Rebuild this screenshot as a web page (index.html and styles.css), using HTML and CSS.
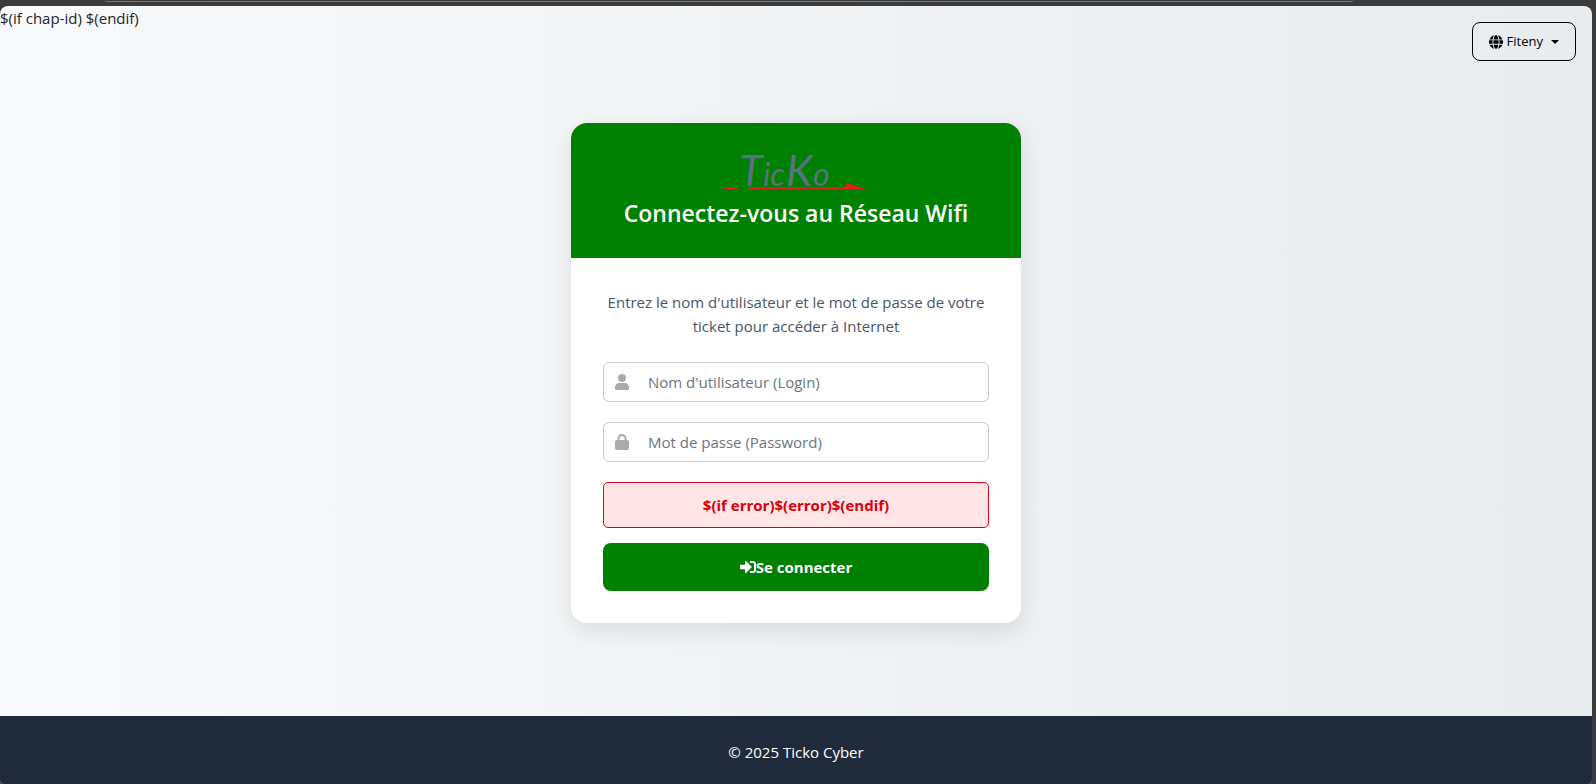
FILE: index.html
```
<!DOCTYPE html>
<html lang="fr">
<head>
<meta charset="utf-8">
<meta name="viewport" content="width=device-width, initial-scale=1">
<title>Ticko Cyber</title>
<link rel="stylesheet" href="styles.css">
</head>
<body>
<div class="frame-bar"></div>
<div class="page">
  <div class="chap">$(if chap-id) $(endif)</div>
  <button class="lang" type="button" aria-haspopup="true">
    <svg class="lang-icon" viewBox="0 0 512 512" aria-hidden="true"><path fill="currentColor" d="M352 256c0 22.200-1.200 43.600-3.300 64H163.300c-2.200-20.400-3.300-41.800-3.300-64s1.200-43.600 3.300-64h185.300c2.200 20.400 3.400 41.800 3.400 64zm28.800-64h123.100c5.300 20.500 8.100 41.900 8.100 64s-2.800 43.500-8.100 64H380.800c2.100-20.600 3.200-42 3.200-64s-1.100-43.400-3.200-64zm112.600-32H376.700c-10-63.900-29.800-117.400-55.300-151.600 78.300 20.700 142 77.500 172 151.600zm-149.100 0H167.700c6.100-36.400 15.500-68.600 27-94.700 10.500-23.600 22.200-40.700 33.500-51.500C239.400 3.200 248.700 0 256 0s16.600 3.200 27.800 13.800c11.300 10.800 23 27.900 33.500 51.500 11.600 26 20.900 58.200 27 94.700zm-209 0H18.600C48.600 85.900 112.200 29.100 190.600 8.400 165.100 42.600 145.300 96.100 135.300 160zM8.100 192h123.100c-2.100 20.600-3.200 42-3.200 64s1.100 43.400 3.200 64H8.100C2.800 299.500 0 278.100 0 256s2.800-43.500 8.100-64zm186.600 254.600c-11.600-26-20.900-58.200-27-94.600h176.600c-6.100 36.400-15.500 68.600-27 94.600-10.500 23.600-22.200 40.700-33.500 51.500C272.600 508.800 263.300 512 256 512s-16.600-3.200-27.800-13.800c-11.300-10.800-23-27.900-33.500-51.600zM135.300 352c10 63.900 29.800 117.400 55.300 151.600C112.200 482.900 48.600 426.100 18.600 352h116.700zm358.100 0c-30 74.100-93.600 130.900-171.900 151.600 25.500-34.200 45.200-87.700 55.300-151.600h116.600z"/></svg>
    <span>Fiteny</span>
    <span class="caret"></span>
  </button>
  <main class="main">
    <section class="card">
      <header class="card-head">
        <svg class="logo" viewBox="0 -6 150 56" role="img" aria-label="TicKo">
          <path fill="#e31b23" d="M3 38h13v2.400H3zM28 38h97v-4l22 6.400H28z"/>
          <text class="logo-text" y="37"><tspan class="logo-cap" x="18">T</tspan><tspan class="logo-low" x="42">ic</tspan><tspan class="logo-cap" x="65">K</tspan><tspan class="logo-low" x="92">o</tspan></text>
        </svg>
        <h1 class="title">Connectez-vous au Réseau Wifi</h1>
      </header>
      <form class="card-body">
        <p class="intro">Entrez le nom d'utilisateur et le mot de passe de votre ticket pour accéder à Internet</p>
        <label class="field">
          <svg class="field-icon" viewBox="0 0 448 512" aria-hidden="true"><path fill="currentColor" d="M224 256a128 128 0 1 0 0-256 128 128 0 1 0 0 256zm-96 32C57 288 0 345 0 416v48c0 26 22 48 48 48h352c26 0 48-22 48-48v-48c0-71-57-128-128-128z"/></svg>
          <input class="input" type="text" aria-label="Nom d'utilisateur" placeholder="Nom d'utilisateur (Login)">
        </label>
        <label class="field">
          <svg class="field-icon" viewBox="0 0 448 512" aria-hidden="true"><path fill="currentColor" d="M144 144v48h160v-48c0-44.200-35.800-80-80-80s-80 35.800-80 80zm-64 48v-48C80 64.500 144.500 0 224 0s144 64.500 144 144v48h16c35.300 0 64 28.700 64 64v192c0 35.300-28.700 64-64 64H64c-35.300 0-64-28.700-64-64V256c0-35.300 28.700-64 64-64z"/></svg>
          <input class="input" type="password" aria-label="Mot de passe" placeholder="Mot de passe (Password)">
        </label>
        <div class="error" role="alert">$(if error)$(error)$(endif)</div>
        <button class="submit" type="submit">
          <svg class="submit-icon" viewBox="0 0 512 512" aria-hidden="true"><path fill="currentColor" d="M416 448h-84c-7 0-12-5-12-12v-40c0-7 5-12 12-12h84c18 0 32-14 32-32V160c0-18-14-32-32-32h-84c-7 0-12-5-12-12V76c0-7 5-12 12-12h84c53 0 96 43 96 96v192c0 53-43 96-96 96zm-47-209L201 71c-15-15-41-5-41 17v96H24c-13 0-24 11-24 24v96c0 13 11 24 24 24h136v96c0 22 26 32 41 17l168-168c9-9 9-25 0-34z"/></svg>
          <span>Se connecter</span>
        </button>
      </form>
    </section>
  </main>
  <footer class="footer">© 2025 Ticko Cyber</footer>
</div>
</body>
</html>
```
FILE: styles.css
```
* { box-sizing: border-box; }

body {
  margin: 0;
  min-height: 100vh;
  display: flex;
  flex-direction: column;
  padding-right: 4px;
  background: #3b3b3b;
  color: #212529;
  font: 15px/24px "Open Sans", "Noto Sans", sans-serif;
}

.frame-bar {
  height: 2px;
  margin: 0 15% 4px 105px;
  border-bottom: 1px solid #77777a;
  border-radius: 0 0 8px 8px;
}

.page {
  position: relative;
  flex: 1;
  display: flex;
  flex-direction: column;
  overflow: hidden;
  border-radius: 8px 8px 4px 4px;
  background: linear-gradient(90deg, #f9fafb, #e8ecef);
}

.lang {
  position: absolute;
  top: 16px;
  right: 16px;
  display: flex;
  align-items: center;
  gap: 4px;
  padding: 8px 16px;
  border: 1px solid #000;
  border-radius: 8px;
  background: transparent;
  color: #000;
  font: inherit;
  font-size: 13px;
  line-height: 21px;
}

.lang-icon { width: 14px; height: 14px; }

.caret {
  margin-left: 4px;
  border-top: 4px solid #000;
  border-left: 4px solid transparent;
  border-right: 4px solid transparent;
}

.main {
  flex: 1;
  display: flex;
  align-items: center;
  justify-content: center;
}

.card {
  width: 100%;
  max-width: 450px;
  overflow: hidden;
  border-radius: 16px;
  background: #fff;
  box-shadow: 0 8px 24px rgba(0, 0, 0, 0.1);
}

.card-head {
  padding: 20px 24px 30px;
  background: #008000;
  color: #fff;
  text-align: center;
}

.logo {
  display: block;
  width: 150px;
  height: 56px;
  margin: 0 auto;
}

.logo-text {
  fill: #5a7184;
  font-family: Lato, sans-serif;
  font-style: italic;
}

.logo-cap { font-size: 43px; }
.logo-low { font-size: 32px; }

.title {
  margin: 0;
  font-size: 23px;
  line-height: 29px;
  font-weight: 600;
}

.card-body { padding: 32px; }

.intro {
  margin: 0 0 24px;
  color: #4a5568;
  text-align: center;
}

.field {
  display: flex;
  align-items: center;
  gap: 19px;
  height: 40px;
  margin-bottom: 20px;
  padding: 0 11px;
  border: 1px solid #ccc;
  border-radius: 6px;
}

.field-icon {
  width: 14px;
  height: 16px;
  color: #aaa;
}

.input {
  flex: 1;
  min-width: 0;
  padding: 0;
  border: 0;
  outline: 0;
  background: transparent;
  font: inherit;
}

.input::placeholder { color: #6c757d; opacity: 1; }

.error {
  margin-bottom: 15px;
  padding: 10px;
  border: 1px solid #dc0014;
  border-radius: 5px;
  background: #ffe5e5;
  color: #d8000c;
  font-weight: 700;
  text-align: center;
}

.submit {
  display: flex;
  align-items: center;
  justify-content: center;
  width: 100%;
  padding: 12px;
  border: 0;
  border-radius: 8px;
  background: #008000;
  color: #fff;
  font: inherit;
  font-weight: 700;
}

.submit-icon { width: 16px; height: 16px; }

.footer {
  padding: 24px 24px 20px;
  background: #1f2a3b;
  color: #fff;
  text-align: center;
}
```
